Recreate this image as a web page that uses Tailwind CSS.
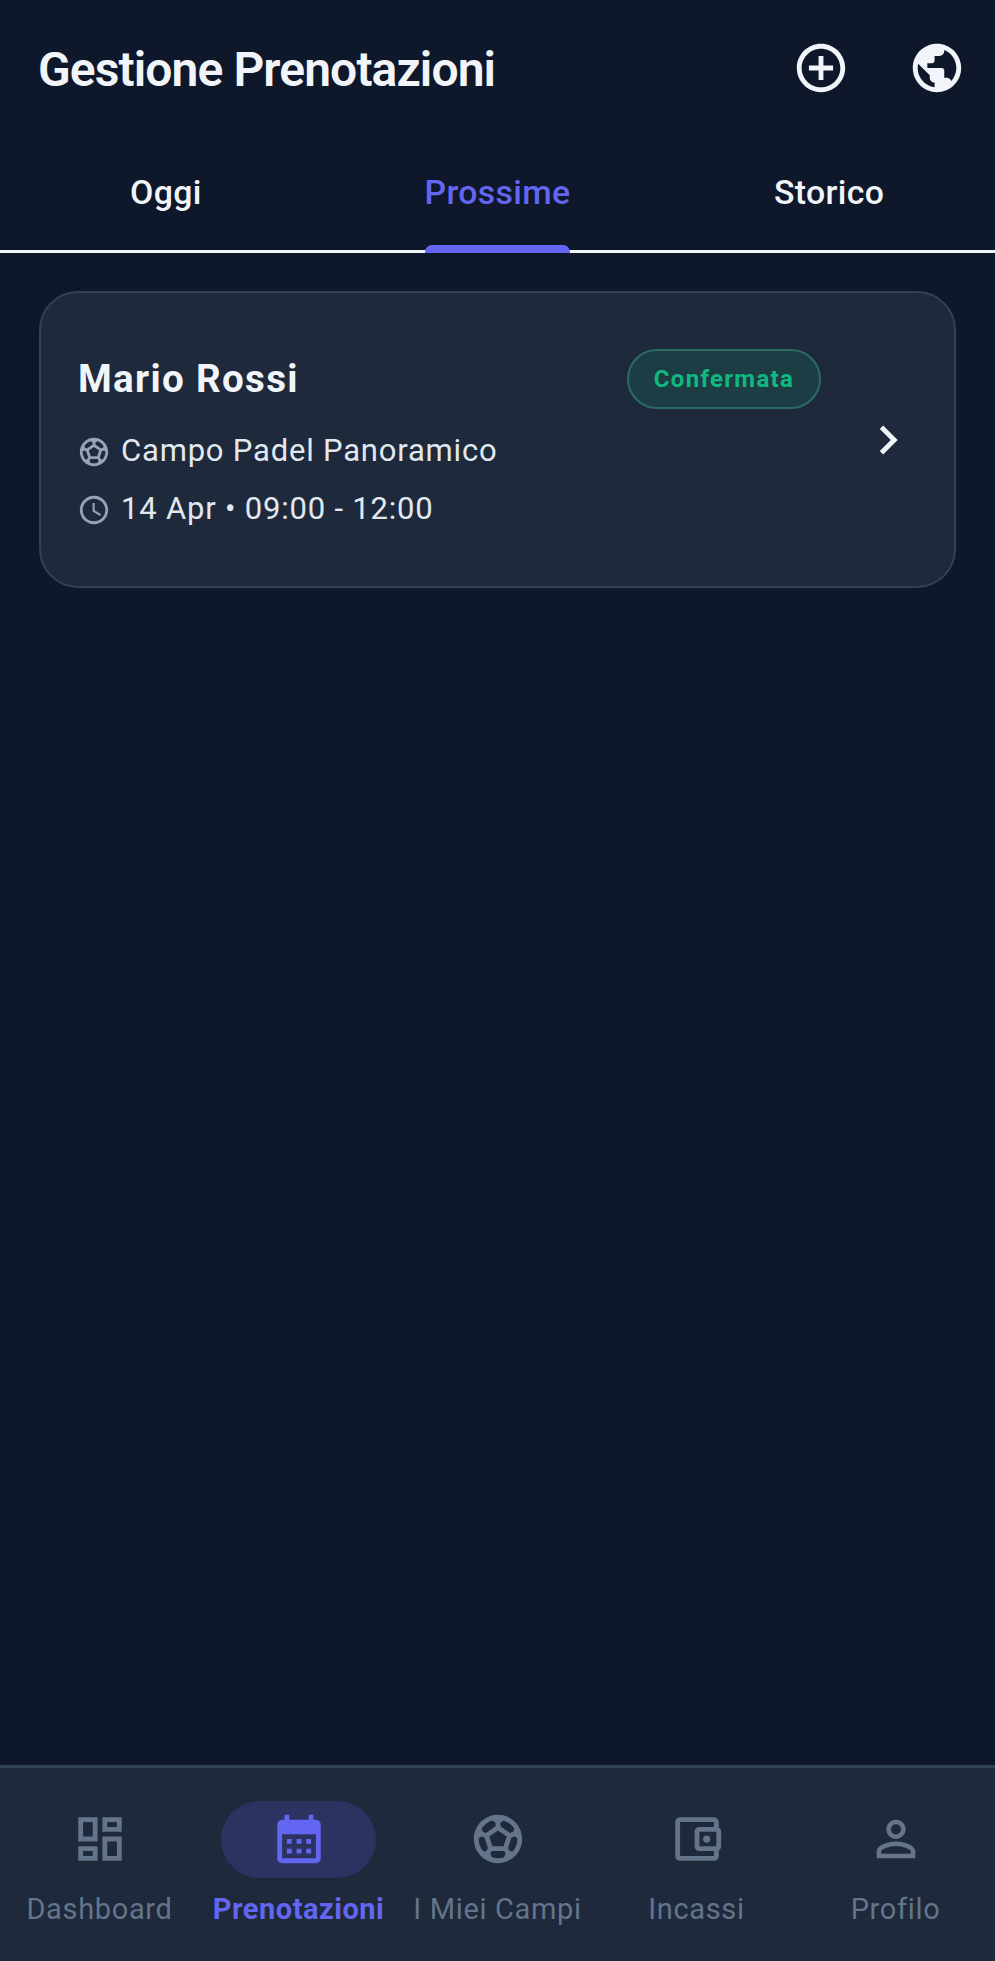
<!DOCTYPE html>
<html lang="it">
<head>
    <meta charset="UTF-8">
    <meta name="viewport" content="width=device-width, initial-scale=1.0">
    <title>Gestione Prenotazioni</title>
    <script src="https://cdn.jsdelivr.net/npm/@tailwindcss/browser@4"></script>
</head>
<body class="bg-[#0f172a] [font-family:Roboto,sans-serif]">
    <div class="flex flex-col h-[1961px] w-[995px] overflow-hidden">
        <!-- App bar -->
        <header class="flex items-center h-[135px] pl-[38px] text-[#f1f5f9] shrink-0">
            <h1 class="flex-1 text-[48px] font-semibold tracking-[-0.9px] leading-none pt-[5px]">Gestione Prenotazioni</h1>
            <button class="w-[116px] h-[116px] flex items-center justify-center">
                <svg class="w-[58px] h-[58px]" viewBox="0 0 24 24" fill="currentColor"><path d="M13 7h-2v4H7v2h4v4h2v-4h4v-2h-4V7zm-1-5C6.48 2 2 6.48 2 12s4.48 10 10 10 10-4.48 10-10S17.52 2 12 2zm0 18c-4.41 0-8-3.59-8-8s3.59-8 8-8 8 3.59 8 8-3.59 8-8 8z"/></svg>
            </button>
            <button class="w-[116px] h-[116px] flex items-center justify-center">
                <svg class="w-[58px] h-[58px]" viewBox="0 0 24 24" fill="currentColor"><path d="M12 2C6.48 2 2 6.48 2 12s4.48 10 10 10 10-4.48 10-10S17.52 2 12 2zm-1 17.93c-3.95-.49-7-3.85-7-7.93 0-.62.08-1.21.21-1.79L9 15v1c0 1.1.9 2 2 2v1.93zm6.9-2.54c-.26-.81-1-1.39-1.9-1.39h-1v-3c0-.55-.45-1-1-1H8v-2h2c.55 0 1-.45 1-1V7h2c1.1 0 2-.9 2-2v-.41c2.93 1.19 5 4.06 5 7.41 0 2.08-.8 3.97-2.1 5.39z"/></svg>
            </button>
        </header>

        <!-- Tabs -->
        <nav class="grid grid-cols-3 h-[118px] border-b-[3px] border-[#f1f5f9] shrink-0 text-[33.8px] font-medium tracking-[0.35px] text-[#f1f5f9]">
            <div class="flex items-center justify-center pt-[1px]">Oggi</div>
            <div class="flex items-center justify-center pt-[1px]">
                <span class="relative h-full flex items-center text-[#6366f1]">
                    Prossime
                    <span class="absolute left-[1px] right-[1px] bottom-[-3px] h-[8px] bg-[#6366f1] rounded-t-[7px]"></span>
                </span>
            </div>
            <div class="flex items-center justify-center pt-[1px]">Storico</div>
        </nav>

        <!-- Booking list -->
        <main class="flex-1 px-[39px] pt-[38px]">
            <div class="flex items-center h-[297px] px-[37px] bg-[#1e293b] border-2 border-[#334155] rounded-[39px]">
                <div class="flex-1 min-w-0 pb-[1px]">
                    <div class="flex items-center justify-between h-[60px]">
                        <span class="text-[38.6px] font-bold tracking-[1.3px] text-[#f1f5f9] leading-none mt-[2px]">Mario Rossi</span>
                        <span class="flex items-center justify-center w-[194px] h-[60px] rounded-full bg-[#1c3d43] border-2 border-[#2a6b62] text-[#10b981] text-[24px] font-bold tracking-[1.3px]">Confermata</span>
                    </div>
                    <div class="flex items-center gap-[10px] h-[40px] mt-[23px] text-[31px] tracking-[0.8px] text-[#e2e8f0]">
                        <svg class="w-[34px] h-[34px] -ml-[1px] text-[#94a3b8]" viewBox="0 0 24 24" fill="currentColor"><path d="M12 2C6.48 2 2 6.48 2 12s4.48 10 10 10 10-4.48 10-10S17.52 2 12 2zm1 3.3l1.35-.95c1.82.56 3.37 1.76 4.38 3.34l-.39 1.34-1.35.46L13 6.7V5.3zm-3.35-.95L11 5.3v1.4L7.01 9.49l-1.35-.46-.39-1.34c1.01-1.57 2.56-2.77 4.38-3.34zM7.08 17.11l-1.14.1C4.73 15.81 4 13.99 4 12c0-.12.01-.23.02-.35l1-.73 1.38.48 1.46 4.34-.78 1.37zm7.42 2.48c-.79.26-1.63.41-2.5.41s-1.71-.15-2.5-.41l-.69-1.49.64-1.1h5.11l.64 1.11-.7 1.48zM14.27 15H9.73l-1.35-4.02L12 8.44l3.63 2.54L14.27 15zm3.79 2.21l-1.14-.1-.79-1.37 1.46-4.34 1.39-.47 1 .73c.01.11.02.22.02.34 0 1.99-.73 3.81-1.94 5.21z"/></svg>
                        <span>Campo Padel Panoramico</span>
                    </div>
                    <div class="flex items-center gap-[10px] h-[40px] mt-[18px] text-[31px] tracking-[0.8px] text-[#e2e8f0]">
                        <svg class="w-[34px] h-[34px] -ml-[1px] text-[#94a3b8]" viewBox="0 0 24 24" fill="currentColor"><path d="M11.99 2C6.47 2 2 6.48 2 12s4.47 10 9.99 10C17.52 22 22 17.52 22 12S17.52 2 11.99 2zM12 20c-4.42 0-8-3.58-8-8s3.58-8 8-8 8 3.58 8 8-3.58 8-8 8zm.5-13H11v6l5.25 3.15.75-1.23-4.5-2.67z"/></svg>
                        <span>14 Apr • 09:00 - 12:00</span>
                    </div>
                </div>
                <svg class="w-[58px] h-[58px] ml-[38px] text-[#f1f5f9] shrink-0" viewBox="0 0 24 24" fill="currentColor"><path d="M10 6L8.59 7.41 13.17 12l-4.58 4.59L10 18l6-6z"/></svg>
            </div>
        </main>

        <!-- Bottom navigation -->
        <footer class="grid grid-cols-5 h-[196px] pt-[33px] bg-[#1e293b] border-t-[3px] border-[#334155] shrink-0 text-[29px] tracking-[0.65px] text-[#64748b]">
            <div class="flex flex-col items-center">
                <div class="flex items-center justify-center w-[155px] h-[77px] pb-[2px]">
                    <svg class="w-[58px] h-[58px]" viewBox="0 0 24 24" fill="currentColor"><path d="M19 5v2h-4V5h4M9 5v6H5V5h4m10 8v6h-4v-6h4M9 17v2H5v-2h4M21 3h-8v6h8V3zM11 3H3v10h8V3zm10 8h-8v10h8V11zm-10 4H3v6h8v-6z"/></svg>
                </div>
                <span class="mt-[14px] leading-[34px]">Dashboard</span>
            </div>
            <div class="flex flex-col items-center">
                <div class="flex items-center justify-center w-[155px] h-[77px] pb-[2px] rounded-full bg-[#2c3360] text-[#6366f1]">
                    <svg class="w-[58px] h-[58px]" viewBox="0 0 24 24" fill="currentColor"><path fill-rule="evenodd" d="M19 4h-1V2h-2v2H8V2H6v2H5c-1.1 0-2 .9-2 2v14c0 1.1.9 2 2 2h14c1.1 0 2-.9 2-2V6c0-1.1-.9-2-2-2zm0 16H5V10h14v10zM9 14H7v-2h2v2zm4 0h-2v-2h2v2zm4 0h-2v-2h2v2zm-8 4H7v-2h2v2zm4 0h-2v-2h2v2zm4 0h-2v-2h2v2z"/></svg>
                </div>
                <span class="mt-[14px] leading-[34px] font-bold tracking-[0.5px] text-[#6366f1]">Prenotazioni</span>
            </div>
            <div class="flex flex-col items-center">
                <div class="flex items-center justify-center w-[155px] h-[77px] pb-[2px]">
                    <svg class="w-[58px] h-[58px]" viewBox="0 0 24 24" fill="currentColor"><path d="M12 2C6.48 2 2 6.48 2 12s4.48 10 10 10 10-4.48 10-10S17.52 2 12 2zm1 3.3l1.35-.95c1.82.56 3.37 1.76 4.38 3.34l-.39 1.34-1.35.46L13 6.7V5.3zm-3.35-.95L11 5.3v1.4L7.01 9.49l-1.35-.46-.39-1.34c1.01-1.57 2.56-2.77 4.38-3.34zM7.08 17.11l-1.14.1C4.73 15.81 4 13.99 4 12c0-.12.01-.23.02-.35l1-.73 1.38.48 1.46 4.34-.78 1.37zm7.42 2.48c-.79.26-1.63.41-2.5.41s-1.71-.15-2.5-.41l-.69-1.49.64-1.1h5.11l.64 1.11-.7 1.48zM14.27 15H9.73l-1.35-4.02L12 8.44l3.63 2.54L14.27 15zm3.79 2.21l-1.14-.1-.79-1.37 1.46-4.34 1.39-.47 1 .73c.01.11.02.22.02.34 0 1.99-.73 3.81-1.94 5.21z"/></svg>
                </div>
                <span class="mt-[14px] leading-[34px]">I Miei Campi</span>
            </div>
            <div class="flex flex-col items-center">
                <div class="flex items-center justify-center w-[155px] h-[77px] pb-[2px]">
                    <svg class="w-[58px] h-[58px]" viewBox="0 0 24 24" fill="currentColor"><path d="M21 7.28V5c0-1.1-.9-2-2-2H5c-1.11 0-2 .9-2 2v14c0 1.1.89 2 2 2h14c1.1 0 2-.9 2-2v-2.28c.59-.35 1-.98 1-1.72V9c0-.74-.41-1.37-1-1.72zM20 9v6h-7V9h7zM5 19V5h14v2h-6c-1.1 0-2 .9-2 2v6c0 1.1.9 2 2 2h6v2H5z"/><circle cx="16" cy="12" r="1.5"/></svg>
                </div>
                <span class="mt-[14px] leading-[34px]">Incassi</span>
            </div>
            <div class="flex flex-col items-center">
                <div class="flex items-center justify-center w-[155px] h-[77px] pb-[2px]">
                    <svg class="w-[58px] h-[58px]" viewBox="0 0 24 24" fill="currentColor"><path d="M12 5.9c1.16 0 2.1.94 2.1 2.1s-.94 2.1-2.1 2.1S9.9 9.16 9.9 8s.94-2.1 2.1-2.1m0 9c2.97 0 6.1 1.46 6.1 2.1v1.1H5.9V17c0-.64 3.13-2.1 6.1-2.1M12 4C9.79 4 8 5.79 8 8s1.79 4 4 4 4-1.79 4-4-1.79-4-4-4zm0 9c-2.67 0-8 1.34-8 4v3h16v-3c0-2.66-5.33-4-8-4z"/></svg>
                </div>
                <span class="mt-[14px] leading-[34px]">Profilo</span>
            </div>
        </footer>
    </div>
</body>
</html>
